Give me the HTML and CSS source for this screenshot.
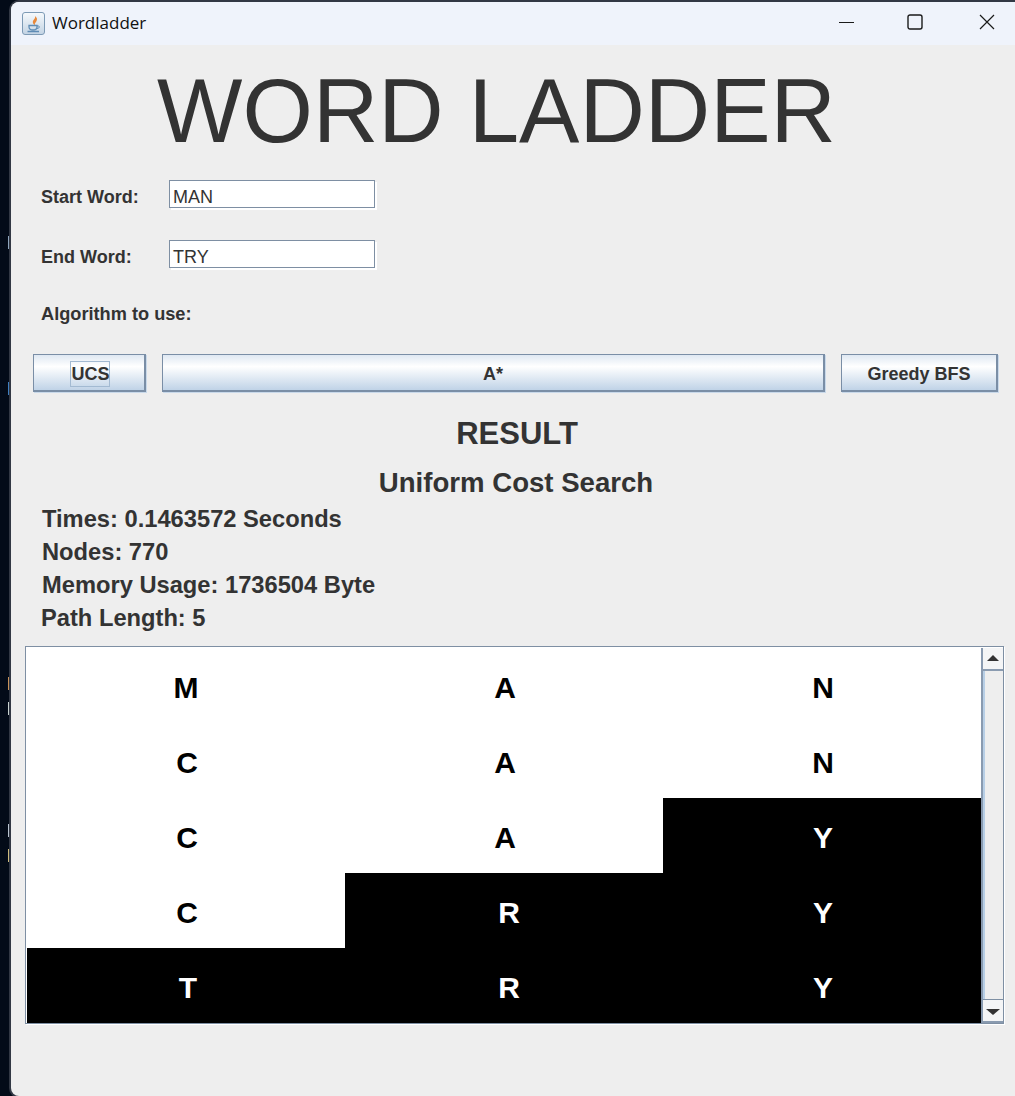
FILE: index.html
```html
<!DOCTYPE html>
<html lang="en">
<head>
    <meta charset="UTF-8">
    <title>Wordladder</title>
    <link rel="stylesheet" href="styles.css">
</head>
<body>

<div class="desktop-bits">
    <span class="bit bit-a"></span>
    <span class="bit bit-b"></span>
    <span class="bit bit-c"></span>
    <span class="bit bit-d"></span>
    <span class="bit bit-e"></span>
    <span class="bit bit-f"></span>
</div>

<div class="window">
    <div class="titlebar">
        <div class="app-icon">
            <svg width="16" height="18" viewBox="0 0 16 18">
                <path d="M9 1 C10 4 6 5 7 8 C7.500 9.500 8.500 10 9 10 C8 8 11 7 11 4 C11 3 10 2 9 1 Z" fill="#e8883a"/>
                <path d="M3 10.500 H11 V12 C11 14 9.500 15 7 15 C4.500 15 3 14 3 12 Z" fill="none" stroke="#5f8cb5" stroke-width="1.300"/>
                <path d="M11 11 C14 10.500 14.500 13 11 13.500" fill="none" stroke="#5f8cb5" stroke-width="1"/>
                <path d="M1.500 16.500 H13" stroke="#5f8cb5" stroke-width="1.300"/>
            </svg>
        </div>
        <span class="app-name">Wordladder</span>
        <div class="window-controls">
            <svg class="control control-min" width="16" height="16" viewBox="0 0 16 16"><path d="M0 8.500 H15" stroke="#1a1a1a" stroke-width="1"/></svg>
            <svg class="control" width="16" height="16" viewBox="0 0 16 16"><rect x="1" y="1" width="14" height="14" rx="2" fill="none" stroke="#1a1a1a" stroke-width="1.400"/></svg>
            <svg class="control" width="16" height="16" viewBox="0 0 16 16"><path d="M1 1 L15 15 M15 1 L1 15" stroke="#1a1a1a" stroke-width="1.200"/></svg>
        </div>
    </div>

    <div class="content">
        <h1>WORD LADDER</h1>

        <div class="field-row">
            <label class="field-label">Start Word:</label>
            <div class="text-field">MAN</div>
        </div>
        <div class="field-row field-row-end">
            <label class="field-label">End Word:</label>
            <div class="text-field">TRY</div>
        </div>
        <div class="field-label algo-label">Algorithm to use:</div>

        <div class="buttons">
            <button class="btn"><span class="focused">UCS</span></button>
            <button class="btn">A*</button>
            <button class="btn">Greedy BFS</button>
        </div>

        <h2>RESULT</h2>
        <h3>Uniform Cost Search</h3>

        <div class="stats">
            <div class="stat">Times: 0.1463572 Seconds</div>
            <div class="stat">Nodes: 770</div>
            <div class="stat">Memory Usage: 1736504 Byte</div>
            <div class="stat stat-last">Path Length: 5</div>
        </div>

        <div class="ladder-box">
            <div class="ladder">
                <div class="cell cell-m">M</div><div class="cell">A</div><div class="cell">N</div>
                <div class="cell">C</div><div class="cell">A</div><div class="cell">N</div>
                <div class="cell">C</div><div class="cell">A</div><div class="cell done">Y</div>
                <div class="cell">C</div><div class="cell done cell-r">R</div><div class="cell done">Y</div>
                <div class="cell done cell-t">T</div><div class="cell done cell-r">R</div><div class="cell done">Y</div>
            </div>
            <div class="scrollbar">
                <div class="arrow-btn">
                    <svg width="12" height="6" viewBox="0 0 12 6"><path d="M6 0 L12 6 H0 Z" fill="#333"/></svg>
                </div>
                <div class="track"></div>
                <div class="arrow-btn arrow-down">
                    <svg width="14" height="6" viewBox="0 0 14 6"><path d="M0 0 H14 L7 6 Z" fill="#333"/></svg>
                </div>
            </div>
        </div>
    </div>
</div>

</body>
</html>
```

FILE: styles.css
```css
* {
    box-sizing: border-box;
}

html, body {
    margin: 0;
    padding: 0;
    height: 100%;
    overflow: hidden;
}

body {
    background-color: #030b18;
    font-family: 'Liberation Sans', Arial, sans-serif;
    color: #333;
    padding: 2px 0 0 11px;
}

.desktop-bits .bit {
    position: absolute;
    left: 8px;
    width: 3px;
    height: 13px;
    background: #8fa6bd;
}

.desktop-bits .bit-a { top: 236px; }
.desktop-bits .bit-b { top: 382px; background: #3f7fc0; }
.desktop-bits .bit-c { top: 677px; background: #c9935a; }
.desktop-bits .bit-d { top: 702px; background: #c8d2cf; }
.desktop-bits .bit-e { top: 824px; background: #b9c4d0; }
.desktop-bits .bit-f { top: 849px; background: #cdbb7e; }

.window {
    width: 1004px;
    height: 1094px;
    background: #eeeeee;
    border-radius: 8px 0 0 8px;
    box-shadow: 0 0 0 2px #323844;
    overflow: hidden;
    position: relative;
}

.titlebar {
    height: 43px;
    background: #eff3fb;
    display: flex;
    align-items: center;
    padding-left: 11px;
}

.app-icon {
    width: 23px;
    height: 23px;
    border: 1px solid #7d9ab5;
    border-radius: 3px;
    background: linear-gradient(#f6f9fc, #c4d4e4);
    display: flex;
    align-items: center;
    justify-content: center;
}

.app-name {
    font-family: 'Open Sans', 'Noto Sans', sans-serif;
    font-size: 17px;
    color: #111;
    margin: 0 0 2px 7px;
}

.window-controls {
    margin: 0 0 3px auto;
    display: flex;
    gap: 56px;
    padding-right: 20px;
}

.control-min {
    margin-right: -4px;
}

h1 {
    margin: 26px 0 0;
    font-size: 90.500px;
    line-height: 80px;
    font-weight: normal;
    text-align: center;
    width: 971px;
}

.field-row {
    display: flex;
    padding-left: 30px;
    margin-top: 29px;
    height: 29px;
}

.field-row-end {
    margin-top: 31px;
}

.field-label {
    font-size: 18px;
    font-weight: bold;
    width: 128px;
    line-height: 35px;
}

.text-field {
    width: 206px;
    height: 28px;
    background: #fff;
    border: 1px solid #7e8fa3;
    box-shadow: 2px 2px 0 #fff;
    font-size: 18px;
    line-height: 32px;
    padding-left: 3px;
}

.algo-label {
    width: auto;
    padding-left: 30px;
    margin-top: 35px;
    font-size: 18.200px;
    line-height: 20px;
}

.buttons {
    display: grid;
    grid-template-columns: 113px 663px 157px;
    column-gap: 16px;
    margin: 30px 0 0 22px;
}

.btn {
    height: 38px;
    padding: 3px 0 0;
    border: 1px solid #7a8ea6;
    border-right-width: 2px;
    border-bottom-width: 2px;
    box-shadow: 1px 1px 0 #c9d9ea;
    background: linear-gradient(#dfe8f2, #ffffff 33%, #c0d3e7);
    font-family: 'Liberation Sans', Arial, sans-serif;
    font-size: 18px;
    font-weight: bold;
    color: #333;
}

.focused {
    display: inline-block;
    border: 1px solid #a3bad2;
    line-height: 24px;
    width: 40px;
    margin-left: 1px;
    padding-left: 1px;
    white-space: nowrap;
}

h2 {
    margin: 25px 0 0;
    font-size: 31px;
    line-height: 34px;
    font-weight: bold;
    text-align: center;
    width: 1012px;
}

h3 {
    margin: 16px 0 0;
    font-size: 27.600px;
    line-height: 32px;
    font-weight: bold;
    text-align: center;
    width: 1010px;
}

.stats {
    padding-left: 31px;
    margin-top: 4px;
}

.stat {
    font-size: 23.700px;
    font-weight: bold;
    line-height: 33px;
}

.stat-last {
    margin-left: -1px;
}

.ladder-box {
    display: flex;
    width: 979px;
    height: 378px;
    margin: 11px 0 0 14px;
    border: 1px solid #7e8fa3;
    padding: 1px 0 0 1px;
    box-shadow: 1px 1px 0 #fff;
    background: #fff;
}

.ladder {
    display: grid;
    grid-template-columns: repeat(3, 318px);
    grid-auto-rows: 75px;
}

.cell {
    background: #fff;
    color: #000;
    font-size: 30px;
    font-weight: bold;
    display: flex;
    align-items: center;
    justify-content: center;
    padding: 4px 0 0 2px;
}

.cell.done {
    background: #000;
    color: #fff;
}

.cell.cell-m {
    padding-left: 0;
}

.cell.cell-t {
    padding-left: 4px;
}

.cell.cell-r {
    padding-left: 10px;
}

.scrollbar {
    width: 22px;
    display: flex;
    flex-direction: column;
    background: #eeeeee;
    border-left: 2px solid #8a9bb0;
}

.arrow-btn {
    height: 23px;
    display: flex;
    align-items: center;
    justify-content: center;
    background: #f4f5f6;
    border-bottom: 2px solid #8a9bb0;
    padding-bottom: 2px;
}

.arrow-down {
    border-top: 1px solid #7e8fa3;
    height: 24px;
    padding: 2px 0 0;
}

.track {
    flex: 1;
    border-left: 2px solid #b8cfe6;
}
```
